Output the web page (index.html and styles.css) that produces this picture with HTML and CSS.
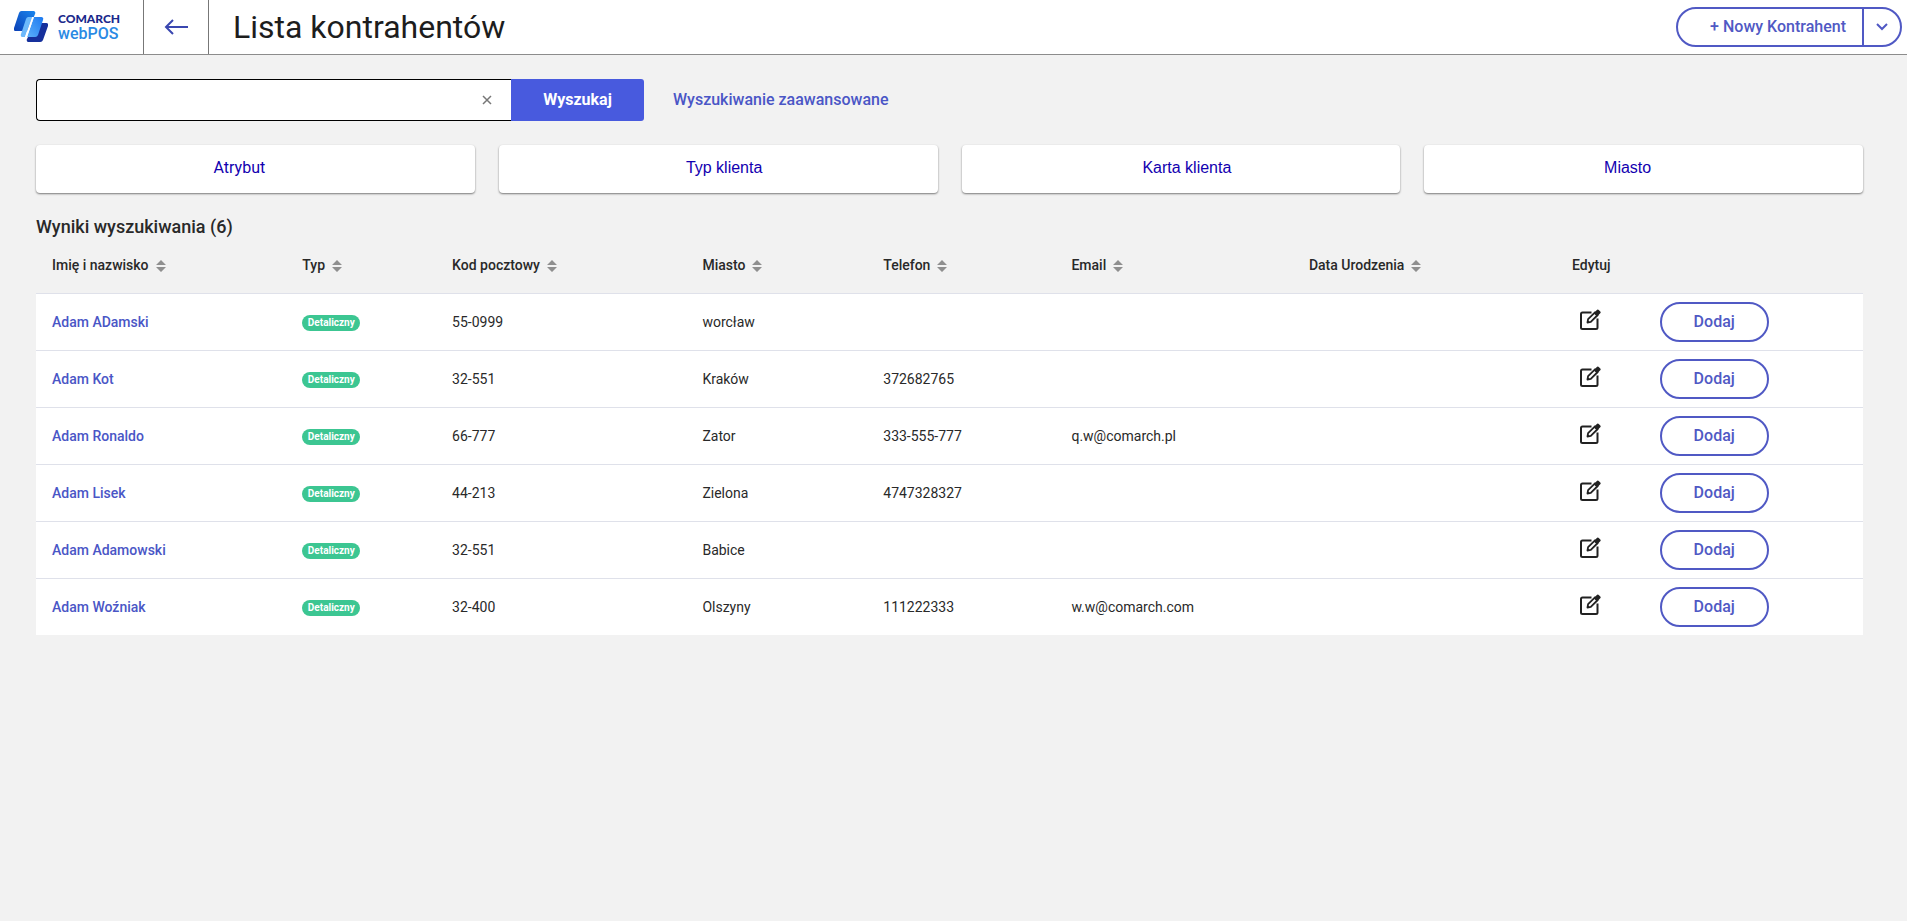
FILE: index.html
```html
<!DOCTYPE html>
<html lang="pl">
<head>
  <meta charset="UTF-8">
  <meta name="viewport" content="width=device-width, initial-scale=1.0">
  <title>Lista kontrahentów</title>
  <link rel="stylesheet" href="styles.css">
</head>
<body>

<!-- Shared icons -->
<svg class="sprite" aria-hidden="true">
  <symbol id="sort" viewBox="0 0 10 12">
    <path d="M5 0l5 5H0zM5 12L0 7h10z" fill="#8f8f8f"/>
  </symbol>
  <symbol id="edit" viewBox="0 0 22 22">
    <path d="M12.500 3.500H3.500a1.500 1.500 0 0 0-1.500 1.500v13.500a1.500 1.500 0 0 0 1.500 1.500h13.500a1.500 1.500 0 0 0 1.500-1.500V9.500" fill="none" stroke="#222" stroke-width="2"/>
    <path d="M8.500 13.500l.6-3.300L16 3.300l2.700 2.700-6.900 6.900z" fill="none" stroke="#222" stroke-width="1.800" stroke-linejoin="round"/>
    <path d="M14.600 4.200l3-3a1.600 1.600 0 0 1 2.400 0l1 1a1.600 1.600 0 0 1 0 2.400l-3 3z" fill="#222"/>
  </symbol>
</svg>

<header class="topbar">
  <a class="logo" href="#">
    <svg class="logo-mark" viewBox="0 0 34 32" aria-hidden="true">
      <defs>
        <linearGradient id="g1" x1="0" y1="1" x2="1" y2="0">
          <stop offset="0" stop-color="#0b3fb5"/>
          <stop offset="1" stop-color="#1a86ee"/>
        </linearGradient>
        <linearGradient id="g2" x1="0" y1="1" x2="1" y2="0">
          <stop offset="0" stop-color="#5cb0fa"/>
          <stop offset="1" stop-color="#1b78f0"/>
        </linearGradient>
      </defs>
      <path d="M8 0h11a2 2 0 0 1 2 3l-6 15a3 3 0 0 1-3 2H2a2 2 0 0 1-2-3L5 2a3 3 0 0 1 3-2z" fill="url(#g1)"/>
      <path d="M21 12h11a2 2 0 0 1 2 3l-5 14a3 3 0 0 1-3 2H15a2 2 0 0 1-2-3z" fill="#16309c"/>
      <path d="M14 6h4l-7 20H9a2 2 0 0 1-2-3l5-15a3 3 0 0 1 2-2z" fill="#6db9fb"/>
      <path d="M20 6h7a2 2 0 0 1 2 3l-5 15a3 3 0 0 1-3 2h-8z" fill="url(#g2)"/>
      <path d="M18 6h2l-7 20h-2z" fill="#fff"/>
    </svg>
    <span class="logo-text">
      <span class="logo-company">COMARCH</span>
      <span class="logo-product">webPOS</span>
    </span>
  </a>
  <button class="back" type="button" aria-label="Wstecz">
    <svg width="24" height="16" viewBox="0 0 24 16" fill="none" stroke="#3a47b0" stroke-width="2">
      <path d="M24 8H2M9 1L2 8l7 7"/>
    </svg>
  </button>
  <h1>Lista kontrahentów</h1>
  <div class="split-button">
    <button class="split-main" type="button">+ Nowy Kontrahent</button>
    <button class="split-toggle" type="button" aria-label="Więcej">
      <svg width="12" height="8" viewBox="0 0 12 8" fill="none" stroke="#5059c4" stroke-width="2">
        <path d="M1 1l5 5 5-5"/>
      </svg>
    </button>
  </div>
</header>

<main>
  <form class="search" onsubmit="return false">
    <div class="search-box">
      <input type="text" id="search-input" aria-label="Szukaj kontrahenta">
      <button class="clear" type="button" aria-label="Wyczyść">
        <svg width="10" height="10" viewBox="0 0 10 10" stroke="#777" stroke-width="1.500">
          <path d="M1 1l8 8M9 1L1 9"/>
        </svg>
      </button>
    </div>
    <button class="search-button" type="submit">Wyszukaj</button>
    <a class="advanced" href="#">Wyszukiwanie zaawansowane</a>
  </form>

  <div class="filters">
    <button class="filter shift-left roboto" type="button">Atrybut</button>
    <button class="filter shift-right" type="button">Typ klienta</button>
    <button class="filter shift-right" type="button">Karta klienta</button>
    <button class="filter shift-left" type="button">Miasto</button>
  </div>

  <h2>Wyniki wyszukiwania (6)</h2>

  <table>
    <colgroup>
      <col class="col-name">
      <col class="col-type">
      <col class="col-zip">
      <col class="col-city">
      <col class="col-phone">
      <col class="col-email">
      <col class="col-birth">
      <col class="col-edit">
      <col>
    </colgroup>
    <thead>
      <tr>
        <th>Imię i nazwisko<svg class="sort"><use href="#sort"/></svg></th>
        <th>Typ<svg class="sort"><use href="#sort"/></svg></th>
        <th>Kod pocztowy<svg class="sort"><use href="#sort"/></svg></th>
        <th>Miasto<svg class="sort"><use href="#sort"/></svg></th>
        <th>Telefon<svg class="sort"><use href="#sort"/></svg></th>
        <th>Email<svg class="sort"><use href="#sort"/></svg></th>
        <th>Data Urodzenia<svg class="sort"><use href="#sort"/></svg></th>
        <th>Edytuj</th>
        <th></th>
      </tr>
    </thead>
    <tbody>
      <tr>
        <td><a href="#">Adam ADamski</a></td>
        <td><span class="badge">Detaliczny</span></td>
        <td>55-0999</td>
        <td>worcław</td>
        <td></td>
        <td></td>
        <td></td>
        <td><button class="edit" type="button" aria-label="Edytuj"><svg><use href="#edit"/></svg></button></td>
        <td><button class="add" type="button">Dodaj</button></td>
      </tr>
      <tr>
        <td><a href="#">Adam Kot</a></td>
        <td><span class="badge">Detaliczny</span></td>
        <td>32-551</td>
        <td>Kraków</td>
        <td>372682765</td>
        <td></td>
        <td></td>
        <td><button class="edit" type="button" aria-label="Edytuj"><svg><use href="#edit"/></svg></button></td>
        <td><button class="add" type="button">Dodaj</button></td>
      </tr>
      <tr>
        <td><a href="#">Adam Ronaldo</a></td>
        <td><span class="badge">Detaliczny</span></td>
        <td>66-777</td>
        <td>Zator</td>
        <td>333-555-777</td>
        <td>q.w@comarch.pl</td>
        <td></td>
        <td><button class="edit" type="button" aria-label="Edytuj"><svg><use href="#edit"/></svg></button></td>
        <td><button class="add" type="button">Dodaj</button></td>
      </tr>
      <tr>
        <td><a href="#">Adam Lisek</a></td>
        <td><span class="badge">Detaliczny</span></td>
        <td>44-213</td>
        <td>Zielona</td>
        <td>4747328327</td>
        <td></td>
        <td></td>
        <td><button class="edit" type="button" aria-label="Edytuj"><svg><use href="#edit"/></svg></button></td>
        <td><button class="add" type="button">Dodaj</button></td>
      </tr>
      <tr>
        <td><a href="#">Adam Adamowski</a></td>
        <td><span class="badge">Detaliczny</span></td>
        <td>32-551</td>
        <td>Babice</td>
        <td></td>
        <td></td>
        <td></td>
        <td><button class="edit" type="button" aria-label="Edytuj"><svg><use href="#edit"/></svg></button></td>
        <td><button class="add" type="button">Dodaj</button></td>
      </tr>
      <tr>
        <td><a href="#">Adam Woźniak</a></td>
        <td><span class="badge">Detaliczny</span></td>
        <td>32-400</td>
        <td>Olszyny</td>
        <td>111222333</td>
        <td>w.w@comarch.com</td>
        <td></td>
        <td><button class="edit" type="button" aria-label="Edytuj"><svg><use href="#edit"/></svg></button></td>
        <td><button class="add" type="button">Dodaj</button></td>
      </tr>
    </tbody>
  </table>
</main>

</body>
</html>
```
FILE: styles.css
```css
* {
  box-sizing: border-box;
}

body {
  margin: 0;
  background-color: #f2f2f2;
  color: #292929;
  font-family: Roboto, sans-serif;
  font-size: 14px;
}

button {
  padding: 0;
  border: none;
  background: none;
  font-family: inherit;
  cursor: pointer;
}

a {
  color: #4a56c6;
  font-weight: 500;
  text-decoration: none;
}

.sprite {
  display: none;
}

/* Top bar */
.topbar {
  display: flex;
  align-items: center;
  height: 55px;
  padding-right: 5px;
  background-color: #fff;
  border-bottom: 1px solid #8c8c8c;
}

.logo {
  display: flex;
  align-items: center;
  gap: 10px;
  width: 144px;
  height: 100%;
  padding-left: 14px;
  border-right: 1px solid #777;
}

.logo-mark {
  width: 34px;
  height: 32px;
}

.logo-text {
  display: flex;
  flex-direction: column;
  padding-bottom: 2px;
}

.logo-company {
  color: #1b2a8c;
  font-family: Lato, sans-serif;
  font-size: 12px;
  font-weight: 900;
  line-height: 15px;
}

.logo-product {
  color: #2a8ae4;
  font-size: 16px;
  line-height: 16px;
}

.back {
  display: flex;
  align-items: center;
  justify-content: center;
  width: 65px;
  height: 100%;
  border-right: 1px solid #777;
}

h1 {
  flex: 1;
  margin: 0 0 0 24px;
  color: #1d1d1d;
  font-size: 32px;
  font-weight: 400;
}

.split-button {
  display: flex;
  height: 40px;
  margin-bottom: 1px;
  border: 2px solid #5059c4;
  border-radius: 20px;
}

.split-main {
  padding: 0 16px 0 32px;
  color: #5059c4;
  font-size: 16px;
  font-weight: 500;
}

.split-toggle {
  width: 38px;
  border-left: 2px solid #5059c4;
}

/* Search */
main {
  padding: 24px 44px 24px 36px;
}

.search {
  display: flex;
  align-items: center;
}

.search-box {
  display: flex;
  align-items: center;
  width: 475px;
  height: 42px;
  padding-right: 19px;
  background-color: #fff;
  border: 1px solid #000;
  border-right: none;
  border-radius: 4px 0 0 4px;
}

.search-box input {
  flex: 1;
  height: 100%;
  padding: 0 12px;
  border: none;
  outline: none;
  background: none;
  font-family: inherit;
  font-size: 16px;
}

.clear {
  display: flex;
}

.search-button {
  width: 133px;
  height: 42px;
  padding-bottom: 1px;
  background-color: #485ade;
  border-radius: 0 3px 3px 0;
  color: #fff;
  font-size: 16px;
  font-weight: 700;
}

.advanced {
  margin-left: 29px;
  padding-bottom: 2px;
  font-size: 16px;
}

/* Filters */
.filters {
  display: grid;
  grid-template-columns: repeat(4, 1fr);
  gap: 24px;
  margin-top: 24px;
}

.filter {
  height: 48px;
  padding-bottom: 3px;
  background-color: #fff;
  border-radius: 4px;
  box-shadow: 0 1px 2px rgba(0, 0, 0, 0.5);
  color: #1200b0;
  font-family: "Liberation Sans", Arial, sans-serif;
  font-size: 16px;
}

.filter.roboto {
  font-family: Roboto, sans-serif;
}

.shift-left {
  padding-right: 32px;
}

.shift-right {
  padding-left: 12px;
}

/* Results */
h2 {
  margin: 22px 0 0;
  font-size: 18px;
  font-weight: 500;
  line-height: 24px;
}

table {
  width: 100%;
  border-collapse: collapse;
  table-layout: fixed;
}

.col-name, .col-zip {
  width: 13.7%;
}

.col-type {
  width: 8.2%;
}

.col-city {
  width: 9.9%;
}

.col-phone {
  width: 10.3%;
}

.col-email {
  width: 13%;
}

.col-birth {
  width: 14.4%;
}

.col-edit {
  width: 4.8%;
}

th {
  height: 54px;
  padding: 0 0 2px 16px;
  text-align: left;
  font-weight: 500;
  white-space: nowrap;
}

td {
  height: 57px;
  padding: 0 0 0 16px;
  border-top: 1px solid #dfe1ea;
}

tbody tr {
  background-color: #fff;
}

.sort {
  width: 10px;
  height: 12px;
  margin-left: 7px;
  vertical-align: -2px;
}

.badge {
  display: inline-block;
  width: 58px;
  background-color: #3cc692;
  border-radius: 8px;
  color: #fff;
  font-size: 10px;
  font-weight: 700;
  line-height: 16px;
  text-align: center;
}

.edit {
  display: block;
  margin: 0 0 4px 7px;
}

.edit svg {
  display: block;
  width: 22px;
  height: 22px;
}

.add {
  display: block;
  width: 109px;
  height: 40px;
  border: 2px solid #5059c4;
  border-radius: 20px;
  color: #5059c4;
  font-size: 16px;
  font-weight: 500;
}
```
